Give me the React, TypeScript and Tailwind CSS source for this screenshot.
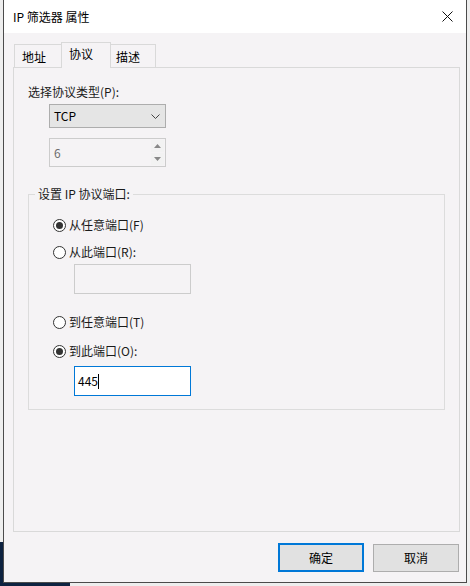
import React from 'react';

const font = { fontFamily: '"Noto Sans CJK SC", "Noto Sans", sans-serif' };

function Radio({ label, checked }: { label: string; checked?: boolean }) {
  return (
    <div className="flex items-center h-[16px] gap-[3px]">
      <span className="w-[13px] h-[13px] rounded-full border border-[#333] bg-white flex items-center justify-center">
        {checked && <span className="w-[7px] h-[7px] rounded-full bg-[#333]" />}
      </span>
      <span className="text-[12px] text-[#1a1a1a] leading-none">{label}</span>
    </div>
  );
}

export default function App() {
  return (
    <div className="relative w-[470px] h-[586px] bg-[#eeeeee] overflow-hidden" style={font}>
      <div className="absolute left-0 bottom-0 w-[70px] h-[44px] bg-[#0d2240]" />
      <div className="relative ml-[3px] w-[464px] h-[583px] bg-[#f5f3f5] border-x border-b border-[#4b4b4b] flex flex-col">
        {/* title bar */}
        <div className="h-[33px] bg-white flex items-center justify-between pl-[9px] pr-[11px]">
          <span className="text-[12px] text-black">IP 筛选器 属性</span>
          <svg width="11" height="11" viewBox="0 0 11 11" className="mr-[2px]">
            <path d="M0.5 0.5 L10.5 10.5 M10.5 0.5 L0.5 10.5" stroke="#111" strokeWidth="1" />
          </svg>
        </div>

        {/* tabs */}
        <div className="pl-[9px] pt-[9px]">
          <div className="flex items-end h-[25px] pl-[1px]">
            <div className="w-[47px] h-[23px] border-t border-l border-[#d9d9d9] bg-[#f5f3f5] text-[12px] flex items-center pl-[7px] pt-[1px]">
              地址
            </div>
            <div className="relative z-10 w-[50px] h-[26px] -mb-px border-x border-t border-[#d9d9d9] bg-[#f5f3f5] text-[12px] flex items-center pl-[7px] pb-[3px]">
              协议
            </div>
            <div className="w-[45px] h-[23px] border-t border-r border-[#d9d9d9] bg-[#f5f3f5] text-[12px] flex items-center pl-[5px] pt-[1px]">
              描述
            </div>
          </div>

          {/* panel */}
          <div className="w-[447px] h-[465px] border border-[#d9d9d9] px-[14px] pt-[16px]">
            <div className="text-[12px] leading-[16px] text-[#1a1a1a]">选择协议类型(P):</div>

            <div className="ml-[21px] mt-[4px] w-[117px] h-[24px] bg-[#e5e5e5] border border-[#adadad] flex items-center justify-between pl-[4px] pr-[5px]">
              <span className="text-[12px]">TCP</span>
              <svg width="9" height="5" viewBox="0 0 9 5">
                <path d="M0.5 0.5 L4.5 4.5 L8.5 0.5" stroke="#444" fill="none" strokeWidth="1" />
              </svg>
            </div>

            <div className="ml-[21px] mt-[10px] w-[117px] h-[29px] border border-[#cccccc] bg-[#f5f3f5] flex items-center justify-between pl-[4px]">
              <span className="text-[12px] text-[#6d6d6d]">6</span>
              <div className="flex flex-col h-full justify-center gap-[1px] pr-[1px]">
                <div className="w-[13px] h-[12px] flex items-center justify-center bg-[#f2f2f2]">
                  <svg width="7" height="4" viewBox="0 0 7 4"><path d="M0 4 L3.5 0 L7 4 Z" fill="#888" /></svg>
                </div>
                <div className="w-[13px] h-[12px] flex items-center justify-center bg-[#f2f2f2]">
                  <svg width="7" height="4" viewBox="0 0 7 4"><path d="M0 0 L3.5 4 L7 0 Z" fill="#888" /></svg>
                </div>
              </div>
            </div>

            {/* group box */}
            <div className="relative mt-[27px] w-[417px] h-[216px] border border-[#dcdcdc]">
              <span className="absolute -top-[9px] left-[6px] px-[3px] bg-[#f5f3f5] text-[12px] leading-[16px] text-[#1a1a1a]">
                设置 IP 协议端口:
              </span>
              <div className="pl-[24px] pt-[22px] flex flex-col">
                <Radio label="从任意端口(F)" checked />
                <div className="mt-[11px]">
                  <Radio label="从此端口(R):" />
                </div>
                <div className="ml-[21px] mt-[4px] w-[117px] h-[30px] border border-[#cccccc] bg-[#f5f3f5]" />
                <div className="mt-[20px]">
                  <Radio label="到任意端口(T)" />
                </div>
                <div className="mt-[13px]">
                  <Radio label="到此端口(O):" checked />
                </div>
                <div className="ml-[21px] mt-[7px] w-[117px] h-[30px] border border-[#0078d7] bg-white flex items-center pl-[3px]">
                  <span className="text-[12px] text-black">445</span>
                  <span className="w-px h-[15px] bg-black" />
                </div>
              </div>
            </div>
          </div>
        </div>

        {/* buttons */}
        <div className="flex justify-end gap-[9px] pr-[7px] mt-[11px]">
          <button className="w-[86px] h-[29px] border-2 border-[#0078d7] bg-[#e1e1e1] text-[12px] text-black">
            确定
          </button>
          <button className="w-[86px] h-[28px] border border-[#adadad] bg-[#e1e1e1] text-[12px] text-black mt-[1px]">
            取消
          </button>
        </div>
      </div>
    </div>
  );
}
